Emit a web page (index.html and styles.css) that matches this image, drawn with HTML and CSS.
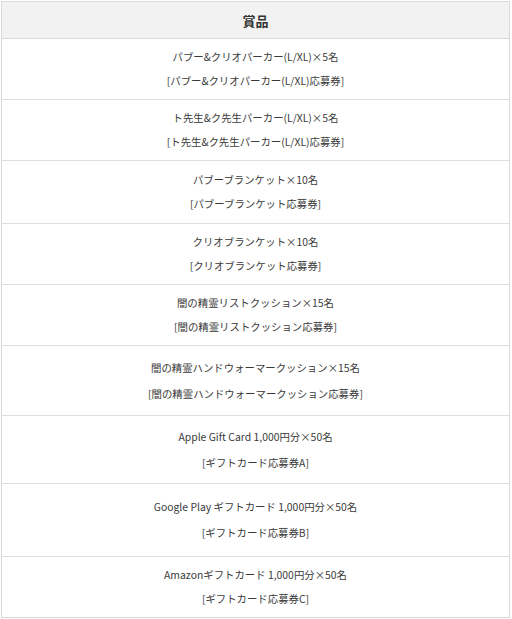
FILE: index.html
```html
<!DOCTYPE html>
<html lang="ja">
<head>
<meta charset="utf-8">
<title>賞品</title>
<link rel="stylesheet" href="styles.css">
</head>
<body>
<table class="prizes">
  <thead>
    <tr><th class="head">賞品</th></tr>
  </thead>
  <tbody>
    <tr><td class="cell"><p class="line">パブー&amp;クリオパーカー(L/XL)×5名</p><p class="line">[パブー&amp;クリオパーカー(L/XL)応募券]</p></td></tr>
    <tr><td class="cell"><p class="line">ト先生&amp;ク先生パーカー(L/XL)×5名</p><p class="line">[ト先生&amp;ク先生パーカー(L/XL)応募券]</p></td></tr>
    <tr><td class="cell cell-m"><p class="line">パブーブランケット×10名</p><p class="line">[パブーブランケット応募券]</p></td></tr>
    <tr><td class="cell"><p class="line">クリオブランケット×10名</p><p class="line">[クリオブランケット応募券]</p></td></tr>
    <tr><td class="cell"><p class="line">闇の精霊リストクッション×15名</p><p class="line">[闇の精霊リストクッション応募券]</p></td></tr>
    <tr><td class="cell cell-l"><p class="line">闇の精霊ハンドウォーマークッション×15名</p><p class="line">[闇の精霊ハンドウォーマークッション応募券]</p></td></tr>
    <tr><td class="cell cell-l2"><p class="line">Apple Gift Card 1,000円分×50名</p><p class="line">[ギフトカード応募券A]</p></td></tr>
    <tr><td class="cell cell-xl"><p class="line">Google Play ギフトカード 1,000円分×50名</p><p class="line">[ギフトカード応募券B]</p></td></tr>
    <tr><td class="cell cell-s"><p class="line">Amazonギフトカード 1,000円分×50名</p><p class="line">[ギフトカード応募券C]</p></td></tr>
  </tbody>
</table>
</body>
</html>
```
FILE: styles.css
```css
html, body {
  margin: 0;
  padding: 0;
  background: #ffffff;
}
body {
  padding: 1px 0 0 1px;
  font-family: "Noto Sans CJK JP", "Noto Sans", sans-serif;
  color: #3a3a3a;
}
.prizes {
  width: 509px;
  border-collapse: collapse;
  border: 1px solid #d9d9d9;
  background: #ffffff;
}
.head {
  height: 36px;
  padding: 0;
  background: #f2f2f2;
  border-bottom: 1px solid #d9d9d9;
  font-size: 13px;
  font-weight: bold;
  color: #333;
  text-align: center;
}
.cell {
  height: 60px;
  padding: 0;
  border-top: 1px solid #dedede;
  text-align: center;
  font-size: 10.4px;
  vertical-align: middle;
}
.cell-m { height: 62px; }
.cell-l { height: 69px; }
.cell-l2 { height: 67px; }
.cell-xl { height: 72px; }
.cell-s { height: 60px; }
.line {
  margin: 0;
  line-height: 24px;
}
.cell-l .line, .cell-l2 .line, .cell-xl .line { line-height: 26px; }
```
